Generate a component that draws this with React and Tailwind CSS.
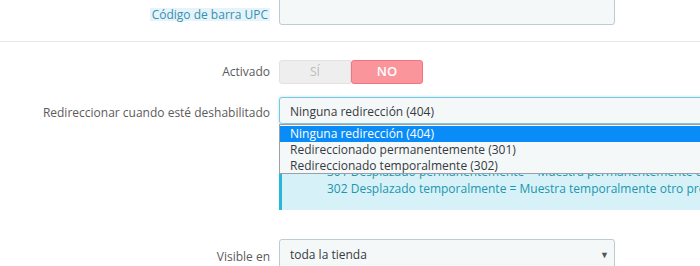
export default function App() {
  const font = { fontFamily: '"Open Sans", "Noto Sans", sans-serif' };
  return (
    <div className="w-[700px] h-[266px] overflow-hidden bg-white text-[12px] text-[#363a41]" style={font}>
      {/* Row 1 */}
      <div className="flex items-start -mt-[2px]">
        <div className="w-[270px] shrink-0 flex justify-end pt-[10px]">
          <span className="bg-[#e4f4fa] text-[#3a8fae] px-[2px] leading-[13px] h-[13px] text-[12px] whitespace-nowrap">Código de barra UPC</span>
        </div>
        <div className="ml-[9px] w-[336px] h-[27px] bg-[#f5f8f9] border border-[#bbcdd2] rounded-[3px]"></div>
      </div>
      <div className="mt-[16px] border-t border-[#e8e8e8]"></div>

      {/* Activado */}
      <div className="flex items-center mt-[18px]">
        <div className="w-[270px] shrink-0 text-right text-[#5b5b5b]">Activado</div>
        <div className="ml-[9px] flex h-[24px] w-[144px]">
          <div className="flex-1 flex items-center justify-center bg-[#eeeeee] border border-[#e2e2e2] rounded-l-[3px] text-[#bdbdbd]">SÍ</div>
          <div className="flex-1 flex items-center justify-center bg-[#fa959c] border border-[#f27480] rounded-[3px] text-white font-semibold text-[13px]">NO</div>
        </div>
      </div>

      {/* Redireccionar */}
      <div className="flex items-start mt-[13px]">
        <div className="w-[270px] shrink-0 text-right text-[#5b5b5b] pt-[7px] whitespace-nowrap">Redireccionar cuando esté deshabilitado</div>
        <div className="ml-[9px] w-[520px] shrink-0 relative">
          <div className="h-[27px] bg-[#f5f8f9] border border-[#7cc8e0] rounded-[3px] shadow-[0_0_3px_#a9dcec] flex items-center pl-[10px] pt-[3px] whitespace-nowrap">
            Ninguna redirección (404)
          </div>
          <div className="mt-[4px] bg-[#d6f2f8] border-l-[3px] border-[#25b9d7] pl-[45px] pt-[35px] pb-[14px] text-[#1d95ae] leading-[17px] h-[82px] whitespace-nowrap">
            <div>301 Desplazado permanentemente = Muestra permanentemente otro producto o categoría.</div>
            <div>302 Desplazado temporalmente = Muestra temporalmente otro producto o categoría.</div>
          </div>
          <div className="absolute left-0 top-[27px] w-[500px] h-[50px] bg-[#f5f8f9] border border-[#9aa0a3] pt-[1px] whitespace-nowrap">
            <div className="h-[16px] leading-[16px] bg-[#0a8cf8] text-white pl-[10px]">Ninguna redirección (404)</div>
            <div className="h-[16px] leading-[16px] pl-[10px]">Redireccionado permanentemente (301)</div>
            <div className="h-[16px] leading-[16px] pl-[10px]">Redireccionado temporalmente (302)</div>
          </div>
        </div>
      </div>

      {/* Visible en */}
      <div className="flex items-start mt-[29px]">
        <div className="w-[270px] shrink-0 text-right text-[#5b5b5b] pt-[9px]">Visible en</div>
        <div className="ml-[9px] w-[336px] h-[30px] bg-[#f5f8f9] border border-[#bbcdd2] rounded-[3px] flex items-center justify-between pl-[10px] pr-[5px] pt-[2px]">
          <span>toda la tienda</span>
          <span className="text-[9px] text-[#555]">▼</span>
        </div>
      </div>
    </div>
  );
}
